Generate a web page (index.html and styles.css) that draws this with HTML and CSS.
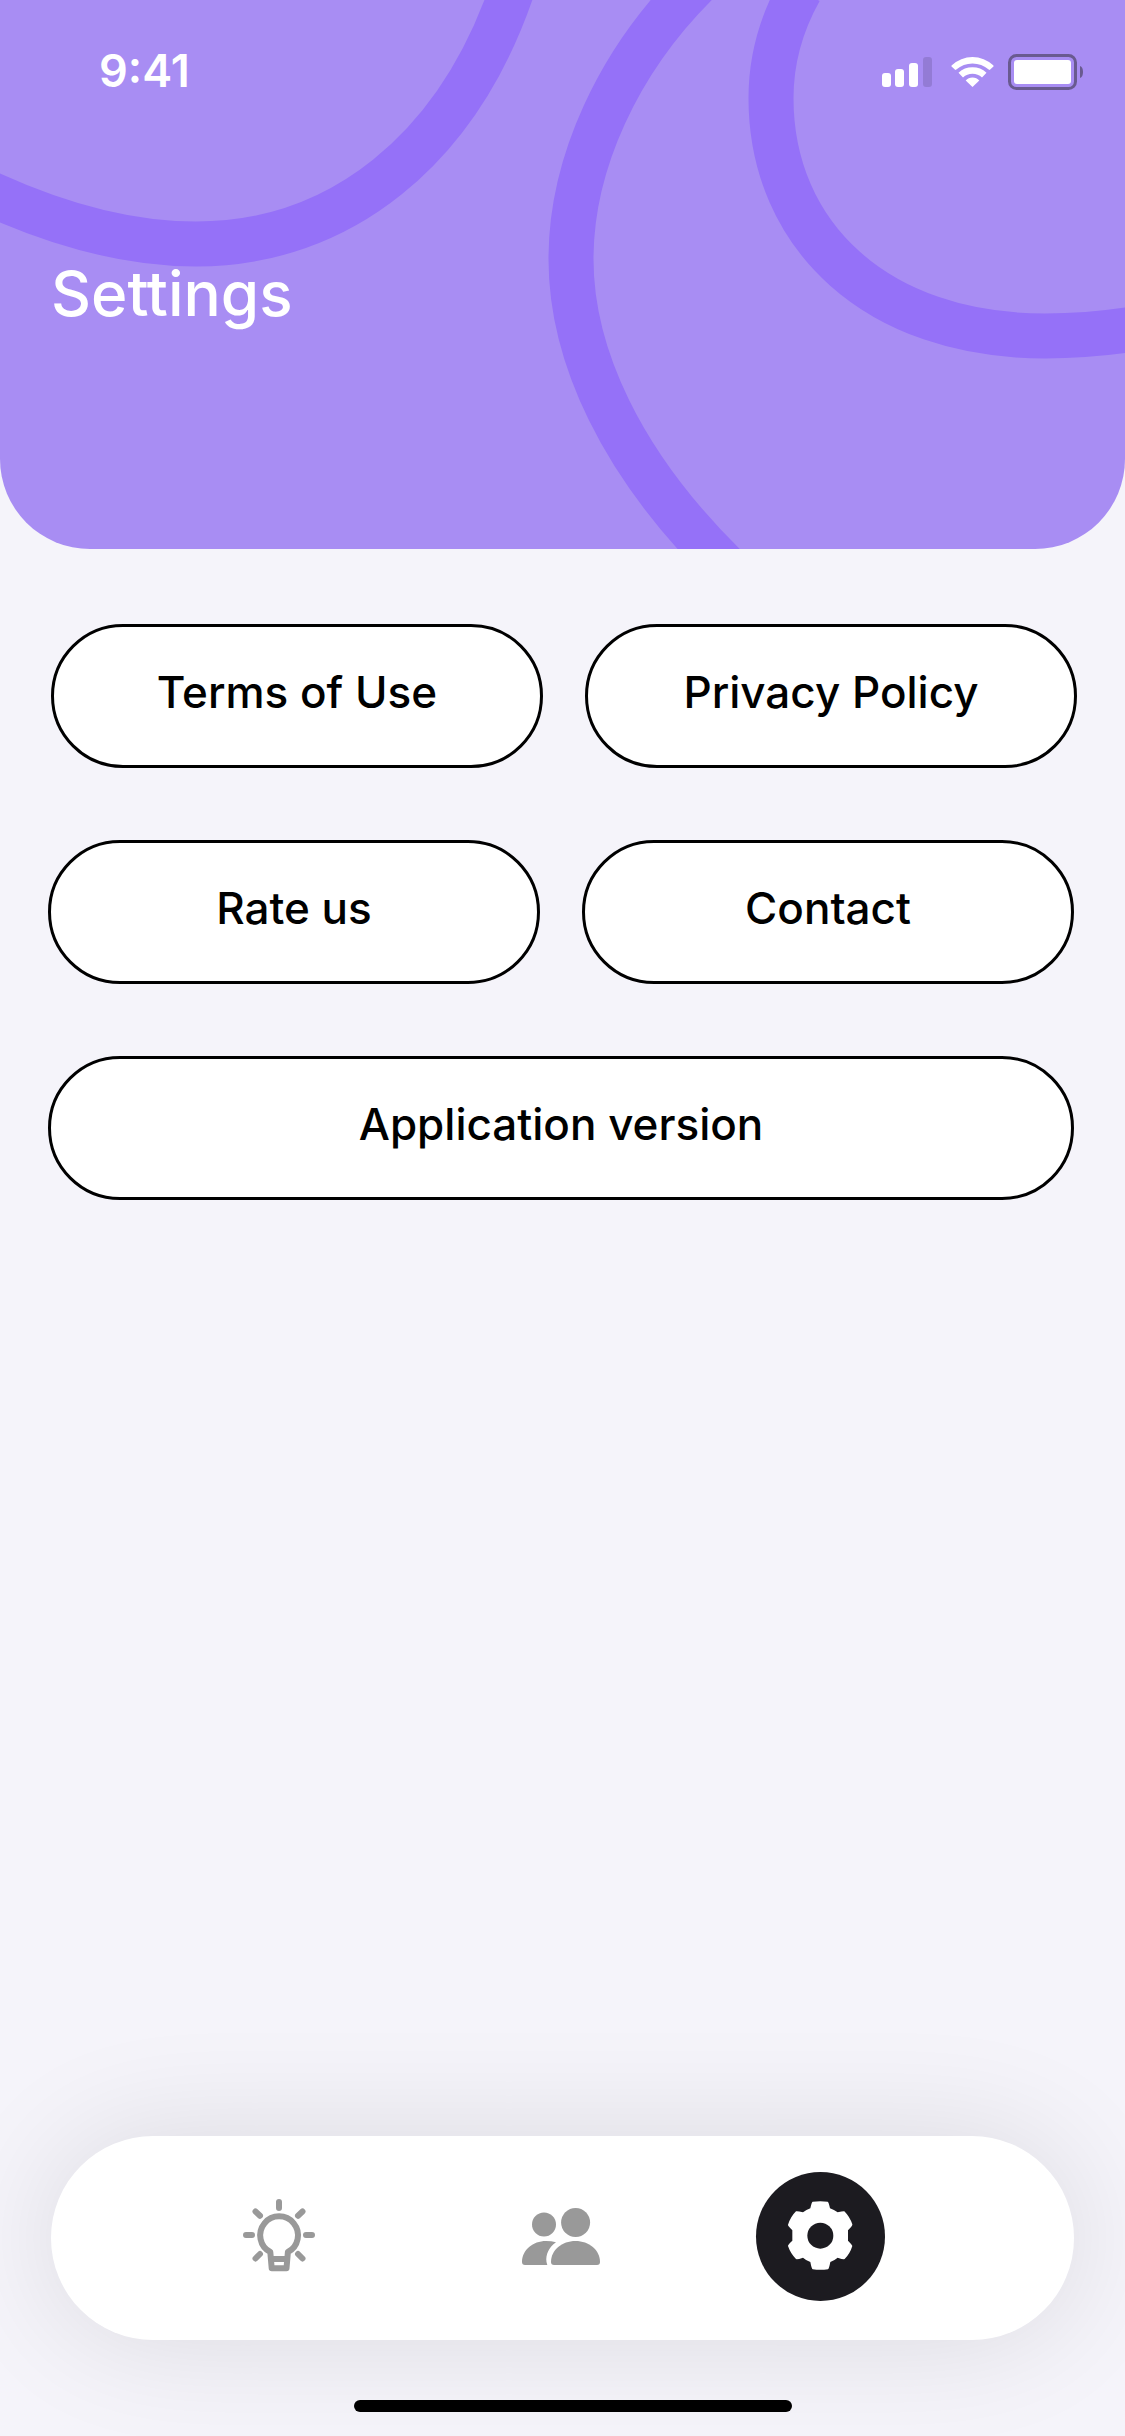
FILE: index.html
```html
<!DOCTYPE html>
<html lang="en">
<head>
<meta charset="utf-8">
<meta name="viewport" content="width=device-width, initial-scale=1">
<title>Settings</title>
<link rel="stylesheet" href="styles.css">
</head>
<body>
<div class="screen">
  <header class="header">
    <svg class="header-art" viewBox="0 0 1125 549" preserveAspectRatio="xMidYMin slice" aria-hidden="true">
      <path d="M-20 189C50 222 125 244 196 244C340 244 457 150 512 -10"/>
      <path d="M700 -20C617 61 571 165 571 259C571 354 620 464 729 570"/>
      <path d="M800 -10C781 24 771 58 771 98C771 235 876 336 1045 336C1075 336 1105 334 1140 328"/>
    </svg>
    <div class="status-bar">
      <time class="clock">9:41</time>
      <div class="status-icons">
        <svg width="50" height="30" viewBox="0 0 50 30" role="img" aria-label="Signal">
          <rect x="0" y="16" width="9" height="14" rx="3"/>
          <rect x="13" y="12" width="9" height="18" rx="3"/>
          <rect x="27" y="6" width="9" height="24" rx="3"/>
          <rect class="dim-bar" x="41" y="0" width="9" height="30" rx="3"/>
        </svg>
        <svg width="43" height="30" viewBox="0 0 43 30" role="img" aria-label="Wi-Fi">
          <path d="M.8 8.2A30.3 30.3 0 0 1 42.2 8.2Q43 9 42.2 9.8L39.2 12.6Q38.5 13.2 37.7 12.6A24.7 24.7 0 0 0 5.3 12.6Q4.5 13.2 3.8 12.6L.8 9.8Q0 9 .8 8.2Z"/>
          <path d="M7.5 15.8A20.6 20.6 0 0 1 35.500 15.8L31 20.4A14.3 14.3 0 0 0 12 20.4Z"/>
          <path d="M14.7 23.5A9 9 0 0 1 28.3 23.5L21.5 30Z"/>
        </svg>
        <svg width="75" height="36" viewBox="0 0 75 36" role="img" aria-label="Battery">
          <rect class="battery-frame" x="1.5" y="1.5" width="66" height="33" rx="7"/>
          <rect x="6" y="6" width="57" height="24" rx="3"/>
          <path class="battery-cap" d="M72 12Q75 13 75 18T72 24Z"/>
        </svg>
      </div>
    </div>
    <h1 class="title">Settings</h1>
  </header>

  <main class="options">
    <div class="row row-first">
      <button class="option" type="button">Terms of Use</button>
      <button class="option" type="button">Privacy Policy</button>
    </div>
    <div class="row">
      <button class="option" type="button">Rate us</button>
      <button class="option" type="button">Contact</button>
    </div>
    <div class="row">
      <button class="option" type="button">Application version</button>
    </div>
  </main>

  <nav class="tabs" aria-label="Main">
    <a class="tab" href="#ideas" aria-label="Ideas">
      <svg class="bulb" width="72" height="76" viewBox="0 0 72 76" aria-hidden="true">
        <path d="M36 3V9M3 36H9M63 36H69M12.5 12.5L17 16.7M59.5 12.5L55 16.7M12.5 59.5L17 55M59.5 59.5L55 55"/>
        <path d="M28.7 69.2L27.3 53A18.9 18.9 0 1 1 44.9 53L43.5 69.2ZM29 60H43"/>
      </svg>
    </a>
    <a class="tab" href="#people" aria-label="People">
      <svg class="people" width="78" height="57" viewBox="0 0 78 57" aria-hidden="true">
        <circle cx="53.6" cy="14.5" r="14.5"/>
        <circle cx="22" cy="16.5" r="12"/>
        <path d="M32 57Q29 57 29 54C29 42 40 33 53.5 33S78 42 78 54Q78 57 75 57Z"/>
        <path d="M3 57Q0 57 0 54C0 42 11 33 24 33Q29.5 33 34 34.3C26.5 39.5 23.5 47 24.5 54L25.3 57Z"/>
      </svg>
    </a>
    <a class="tab tab-active" href="#settings" aria-label="Settings" aria-current="page">
      <svg class="gear" width="72" height="72" viewBox="13 16 216 216" aria-hidden="true">
        <path d="M96 18Q119 15 141 18Q144 19 148 38Q160 42 171 50Q188 46 191 47Q207 63 215 86Q216 90 202 104V135Q215 148 215 151Q208 174 192 190Q189 192 171 186Q160 195 149 199Q145 220 142 221Q119 224 96 221Q93 220 89 199Q77 195 67 186Q49 192 46 190Q30 174 22 151Q21 148 35 135V104Q21 91 22 87Q30 63 46 47Q49 45 67 50Q77 42 89 38Q93 19 96 18Z"/>
        <circle cx="119" cy="120" r="39"/>
      </svg>
    </a>
  </nav>
  <div class="home-indicator"></div>
</div>
</body>
</html>
```

FILE: styles.css
```css
* {
  box-sizing: border-box;
}

body {
  margin: 0;
  background: #f5f4fa;
  color: #000;
  font-family: Inter, "Liberation Sans", sans-serif;
}

.screen {
  display: flex;
  flex-direction: column;
  min-height: 100vh;
  padding-bottom: 24px;
  overflow: hidden;
}

.header {
  position: relative;
  padding: 54px 42px 225px 51px;
  border-radius: 0 0 90px 90px;
  background: #a88df3;
  color: #fff;
  overflow: hidden;
}

/* Decorative ribbons behind the header text */
.header-art {
  position: absolute;
  inset: 0;
  width: 100%;
  height: 100%;
  fill: none;
  stroke: #9571f8;
  stroke-width: 45;
}

.status-bar {
  position: relative;
  display: flex;
  align-items: center;
  justify-content: space-between;
  padding-left: 48px;
}

.clock {
  padding-bottom: 2px;
  font-size: 45px;
  font-weight: 600;
  line-height: 34px;
}

.status-icons {
  display: flex;
  align-items: center;
  fill: #fff;
}

.status-icons svg + svg {
  margin-left: 19px;
}

.status-icons svg:last-child {
  margin-left: 14px;
}

.dim-bar {
  fill: #000;
  opacity: 0.12;
}

.battery-frame {
  fill: none;
  stroke: #695a90;
  stroke-width: 3;
}

.battery-cap {
  fill: #695a90;
}

.title {
  position: relative;
  margin: 174px 0 0;
  font-size: 62px;
  font-weight: 500;
  line-height: 60px;
}

.options {
  display: flex;
  flex-direction: column;
  gap: 72px;
  padding-top: 75px;
}

.row {
  display: flex;
  gap: 42px;
  padding: 0 51px 0 48px;
}

.row-first {
  padding: 0 48px 0 51px;
}

.option {
  flex: 1 1 0;
  height: 144px;
  padding: 0 0 8px;
  border: 3px solid #000;
  border-radius: 72px;
  background: #fff;
  color: #000;
  font: 500 44px/60px Inter, "Liberation Sans", sans-serif;
}

.tabs {
  display: grid;
  grid-template-columns: 282fr 282fr 237fr;
  place-items: center;
  margin: auto 51px 60px;
  padding: 36px 135px 39px 87px;
  border-radius: 102px;
  background: #fff;
  box-shadow: 0 0 120px rgba(0, 0, 0, 0.11);
}

.tab {
  display: grid;
  place-items: center;
  width: 129px;
  height: 129px;
  border-radius: 50%;
}

.tab-active {
  background: #1c1b20;
}

.bulb {
  fill: none;
  stroke: #999;
  stroke-width: 6;
  stroke-linecap: round;
  stroke-linejoin: round;
}

.people {
  fill: #999;
}

.gear path {
  fill: #fff;
}

.gear circle {
  fill: #1c1b20;
}

.home-indicator {
  height: 12px;
  margin: 0 333px 0 354px;
  border-radius: 6px;
  background: #000;
}
```
